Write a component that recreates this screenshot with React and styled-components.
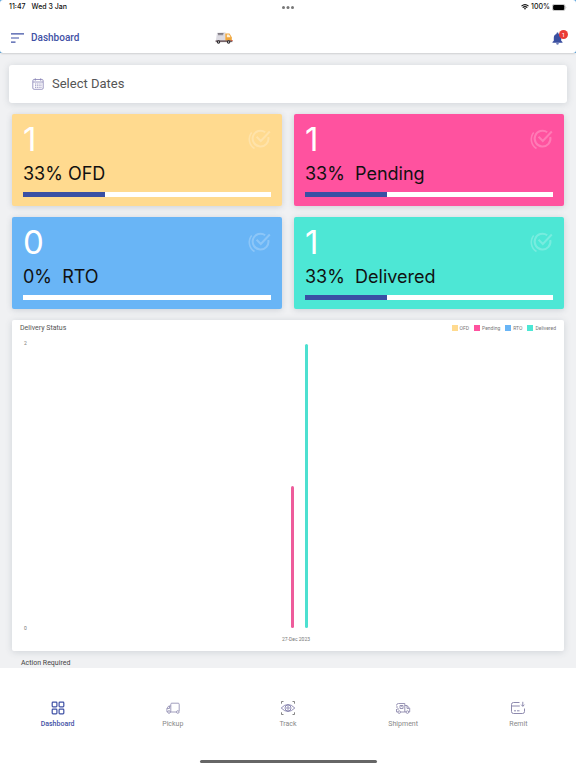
import React from 'react';
import styled, { createGlobalStyle } from "styled-components";

const GlobalStyle = createGlobalStyle`
  * {
    box-sizing: border-box;
  }
  body {
    margin: 0;
    background: #f0f1f3;
    font-family: Roboto, "Liberation Sans", sans-serif;
  }
  button {
    border: 0;
    padding: 0;
    background: transparent;
    font-family: inherit;
    cursor: pointer;
  }
  svg {
    display: block;
    flex: none;
  }
`;

const Screen = styled.div`
  height: 100vh;
  display: flex;
  flex-direction: column;
  overflow: hidden;
`;

const Top = styled.header`
  flex: none;
  background: #fff;
  border-radius: 3px;
  box-shadow: 0 1px 2px rgba(0, 0, 0, 0.14);
`;

const TopEdge = styled.div`
  background: #5ba7e0;
  position: relative;
  z-index: 1;
`;

const StatusBar = styled.div`
  height: 14px;
  padding: 0 9px;
  display: grid;
  grid-template-columns: 1fr auto 1fr;
  align-items: center;
  font-family: Inter, sans-serif;
  font-size: 7px;
  font-weight: 500;
  line-height: 14px;
  color: #111;
`;

const StatusGroup = styled.div`
  display: flex;
  align-items: center;
  justify-content: ${({ $end }) => ($end ? "flex-end" : "flex-start")};
  gap: ${({ $end }) => ($end ? "2px" : "6px")};
`;

const AppBar = styled.div`
  height: 39px;
  padding: 8px 8px 0 11px;
  display: grid;
  grid-template-columns: 204px 1fr auto;
  align-items: center;
`;

const MenuGroup = styled.div`
  display: flex;
  align-items: center;
  gap: 7px;
`;

const PageTitle = styled.h1`
  margin: 0;
  font-size: 10px;
  font-weight: 500;
  line-height: 14px;
  color: #3f51a5;
`;

const BellButton = styled.button`
  position: relative;
  width: 16px;
  height: 16px;
`;

const Badge = styled.span`
  position: absolute;
  top: 0;
  right: 0;
  width: 9px;
  height: 9px;
  border-radius: 50%;
  background: #ea3b35;
  color: #fff;
  font-size: 6px;
  line-height: 9px;
  text-align: center;
`;

const Main = styled.main`
  flex: 1;
  min-height: 0;
  overflow: hidden;
  padding: 12px 12px 0;
  display: flex;
  flex-direction: column;
  gap: 11px;
  background: #f0f1f3;
`;

const DateButton = styled.button`
  flex: none;
  height: 38px;
  margin: 0 -3px;
  padding: 0 23px 2px;
  display: flex;
  align-items: center;
  gap: 8px;
  border-radius: 3px;
  background: #fff;
  box-shadow: 0 1px 7px rgba(60, 75, 95, 0.18);
  font-size: 13px;
  color: #555;
`;

const Cards = styled.section`
  display: grid;
  grid-template-columns: 1fr 1fr;
  gap: 11px 12px;
`;

const Card = styled.article`
  height: 92px;
  padding: 5px 11px 0;
  border-radius: 2px;
  background: ${({ $color }) => $color};
  box-shadow: 0 1px 6px rgba(60, 75, 95, 0.2);
  font-family: Inter, sans-serif;
`;

const CardHead = styled.div`
  height: 40px;
  display: flex;
  align-items: center;
  justify-content: space-between;
`;

const Count = styled.div`
  font-size: 33px;
  font-weight: 400;
  line-height: 40px;
  color: #fff;
`;

const CardLabel = styled.div`
  height: 33px;
  font-size: 18px;
  line-height: 30px;
  white-space: pre;
  color: #111;
`;

const Track = styled.div`
  height: 5px;
  background: #fff;
`;

const Fill = styled.div`
  height: 100%;
  background: #3a50a4;
`;

const ChartCard = styled.section`
  flex: none;
  height: 331px;
  padding: 3px 8px 8px;
  display: flex;
  flex-direction: column;
  border-radius: 2px;
  background: #fff;
  box-shadow: 0 1px 7px rgba(60, 75, 95, 0.18);
`;

const ChartHead = styled.div`
  display: flex;
  justify-content: space-between;
  align-items: center;
  height: 10px;
`;

const ChartTitle = styled.h2`
  margin: 0;
  font-size: 7px;
  font-weight: 400;
  line-height: 10px;
  color: #555;
`;

const Legend = styled.ul`
  display: flex;
  gap: 5px;
  margin: 0;
  padding: 0;
  list-style: none;
  font-size: 5px;
  line-height: 10px;
  color: #777;
`;

const LegendItem = styled.li`
  display: flex;
  align-items: center;
  gap: 2px;
  &::before {
    content: "";
    width: 6px;
    height: 6px;
    background: ${({ $color }) => $color};
  }
`;

const Plot = styled.div`
  height: 284px;
  margin-top: 11px;
  display: grid;
  grid-template-columns: 22px 1fr;
`;

const Axis = styled.div`
  display: flex;
  flex-direction: column;
  justify-content: space-between;
  margin: -5px 0 -4px;
  padding-left: 4px;
  font-size: 5px;
  line-height: 8px;
  color: #777;
`;

const Bars = styled.div`
  display: flex;
  justify-content: center;
  align-items: flex-end;
  gap: 11px;
`;

const Bar = styled.div`
  width: 3px;
  border-radius: 2px;
  background: ${({ $color }) => $color};
`;

const AxisDate = styled.div`
  margin-top: 7px;
  padding-left: 16px;
  font-size: 5px;
  line-height: 8px;
  text-align: center;
  color: #777;
`;

const SectionTitle = styled.h2`
  margin: -4px 0 0 9px;
  font-size: 7px;
  font-weight: 400;
  line-height: 10px;
  color: #444;
`;

const BottomNav = styled.nav`
  flex: none;
  height: 100px;
  background: #fff;
  display: flex;
  flex-direction: column;
  justify-content: space-between;
  align-items: center;
`;

const Tabs = styled.div`
  width: 100%;
  padding-top: 32px;
  display: grid;
  grid-template-columns: repeat(5, 1fr);
`;

const Tab = styled.button`
  display: flex;
  flex-direction: column;
  align-items: center;
  gap: 3px;
  font-size: 7px;
  font-weight: ${({ $active }) => ($active ? 500 : 400)};
  line-height: 10px;
  color: ${({ $active }) => ($active ? "#3f51a5" : "#888")};
`;

const HomeBar = styled.div`
  width: 177px;
  height: 3px;
  margin-bottom: 5px;
  border-radius: 2px;
  background: #666;
`;

const stats = [
  { name: "OFD", count: 1, percent: 33, label: "33% OFD", color: "#ffda8f" },
  { name: "Pending", count: 1, percent: 33, label: "33%  Pending", color: "#ff529f" },
  { name: "RTO", count: 0, percent: 0, label: "0%  RTO", color: "#69b5f6" },
  { name: "Delivered", count: 1, percent: 33, label: "33%  Delivered", color: "#4de7d5" },
];

const MenuIcon = () => (
  <svg width="13" height="10" viewBox="0 0 13 10" stroke="#3f51a5" strokeWidth="1.2">
    <path d="M0 .8h13M0 5h8M0 9.2h4.500" />
  </svg>
);

const TruckLogo = () => (
  <svg width="18" height="12" viewBox="0 0 18 12">
    <path d="M2 .8 10.500 .3V9H.8Z" fill="#dddbe2" />
    <path d="M2.800 1.500h5.700M3 2.700h5.200" stroke="#68636c" strokeWidth=".8" />
    <path d="M10.300 1.500h4.200l2.300 3.700V9h-6.500Z" fill="#f0a63c" />
    <path d="M11.800 2.500h2.300l1.500 2.800h-3.800Z" fill="#fff2da" />
    <path d="M.6 8.300h16.800v1.800H.6Z" fill="#77656a" />
    <circle cx="3.500" cy="10" r="1.700" fill="#272529" />
    <circle cx="13.600" cy="10" r="1.700" fill="#272529" />
    <circle cx="3.500" cy="10" r=".7" fill="#ddd" />
    <circle cx="13.600" cy="10" r=".7" fill="#ddd" />
    <path d="M16.300 8h1.200v1h-1.200Z" fill="#e45431" />
  </svg>
);

const WifiIcon = () => (
  <svg width="8" height="6" viewBox="0 0 8 6" fill="none" stroke="#111" strokeWidth="1.100">
    <path d="M.5 2.200Q4-1 7.500 2.200M1.700 3.600Q4 1.500 6.300 3.600" />
    <path d="M2.900 4.400Q4 3.500 5.100 4.400L4 5.800Z" fill="#111" stroke="none" />
  </svg>
);

const BatteryIcon = () => (
  <svg width="15" height="7" viewBox="0 0 15 7">
    <rect x=".4" y=".4" width="12.600" height="6.200" rx="1.800" fill="none" stroke="#999" strokeWidth=".6" />
    <rect x="1.100" y="1.100" width="11.200" height="4.800" rx="1.200" fill="#000" />
    <path d="M13.800 2.400q1 1.100 0 2.200Z" fill="#999" />
  </svg>
);

const BellIcon = () => (
  <svg width="11" height="15" viewBox="0 -2 11 15" fill="#3a4fa0">
    <path d="M5.500 .6c.6 0 1 .4 1 1v.3c1.700.4 2.700 1.900 2.700 3.800v3l1.300 1.300v.7H.5V10l1.300-1.300v-3c0-1.900 1-3.400 2.700-3.800v-.3c0-.6.4-1 1-1ZM4.200 11.300h2.600c0 .8-.5 1.300-1.300 1.300s-1.300-.5-1.300-1.300Z" />
  </svg>
);

const CalendarIcon = () => (
  <svg width="12" height="14" viewBox="0 -2 12 14" fill="none" stroke="#8580b4" strokeWidth=".8">
    <rect x=".8" y="1.500" width="10.400" height="9.800" rx="1.300" />
    <path d="M1 4h10M3.300 .3v2.400M8.700 .3v2.400" />
    <path d="M3 6h6.500M3 7.700h6.500M3 9.400h6.500" strokeDasharray="1.100 .7" />
  </svg>
);

const CheckIcon = () => (
  <svg width="24" height="22" viewBox="0 0 24 22" fill="none" stroke="#fff" strokeOpacity=".24">
    <path d="M21.300 9A7.900 7.900 0 1 1 18.200 4.200" strokeWidth="2" />
    <path d="m9.600 8.800 4.200 4.200 9-9.500" strokeWidth="2" />
    <path d="M4.700 4.500A10.800 10.800 0 0 0 7.500 20.500" strokeWidth="1.600" />
  </svg>
);

const DashboardIcon = () => (
  <svg width="16" height="16" viewBox="0 0 16 16" fill="none" stroke="#3f51a5" strokeWidth="1.200">
    <rect x="2.200" y="2.200" width="4.700" height="4.700" rx=".8" />
    <rect x="9.100" y="2.200" width="4.700" height="4.700" rx=".8" />
    <rect x="2.200" y="9.100" width="4.700" height="4.700" rx=".8" />
    <rect x="9.100" y="9.100" width="4.700" height="4.700" rx=".8" />
  </svg>
);

const PickupIcon = () => (
  <svg width="16" height="16" viewBox="0 0 16 16" fill="none" stroke="#9693b5" strokeWidth=".9">
    <path d="M5.800 11.800V4.200q0-1 1-1h6.400q1 0 1 1v6.900M5.800 6H3.700L1.900 8.500v3.300h1M5 12h6.500" />
    <path d="M4.500 6v2.500H2" />
    <circle cx="4" cy="12" r="1.300" />
    <circle cx="12.800" cy="12" r="1.300" />
  </svg>
);

const TrackIcon = () => (
  <svg width="16" height="16" viewBox="0 0 16 16" fill="none" stroke="#8581ad" strokeWidth=".9">
    <path d="M1.500 3.700V1.500h2M12.500 1.500h2v2.200M14.500 12.300v2.200h-2M3.500 14.500h-2v-2.200" stroke="#777" />
    <path d="M1.200 8q6.800-7 13.600 0-6.800 7-13.600 0Z" />
    <circle cx="8" cy="8" r="3" />
    <circle cx="8" cy="8" r="1.200" />
  </svg>
);

const ShipmentIcon = () => (
  <svg width="16" height="16" viewBox="0 0 16 16" fill="none" stroke="#8e8aae" strokeWidth=".9">
    <path d="M2.800 11.900H1.500V9M1.500 5.500q0-2 2-2h6.300V12H5.500M9.800 5.500h2.300l2.600 3v3.400h-1M9.800 11.900h1.300M12 5.700v2.700h2.500" />
    <path d="M1 7h2M2 9h2M5 5.500h3v3H5ZM6.500 5.500v1.200" />
    <circle cx="4.200" cy="12.100" r="1.300" />
    <circle cx="12.400" cy="12.100" r="1.300" />
  </svg>
);

const RemitIcon = () => (
  <svg width="16" height="16" viewBox="0 0 16 16" fill="none" stroke="#8e8aae" strokeWidth="1">
    <path d="M9.500 2.500H3.500q-2 0-2 2v7q0 2 2 2h9q2 0 2-2V8.500M1.500 6h8.300" />
    <path d="M4 10.800h2M7 10.800h2.500" />
    <path d="M12.800 1.800v4.500M11.200 4.700l1.600 1.600 1.600-1.600" />
  </svg>
);

const tabs = [
  { name: "Dashboard", Icon: DashboardIcon, active: true },
  { name: "Pickup", Icon: PickupIcon },
  { name: "Track", Icon: TrackIcon },
  { name: "Shipment", Icon: ShipmentIcon },
  { name: "Remit", Icon: RemitIcon },
];

function App() {
  return (
    <Screen>
      <GlobalStyle />
      <TopEdge>
        <Top>
          <StatusBar>
            <StatusGroup>
              <span>11:47</span>
              <span>Wed 3 Jan</span>
            </StatusGroup>
            <svg width="12" height="3" viewBox="0 0 12 3" fill="#777">
              <circle cx="1.500" cy="1.500" r="1.500" />
              <circle cx="6" cy="1.500" r="1.500" />
              <circle cx="10.500" cy="1.500" r="1.500" />
            </svg>
            <StatusGroup $end>
              <WifiIcon />
              <span>100%</span>
              <BatteryIcon />
            </StatusGroup>
          </StatusBar>
          <AppBar>
            <MenuGroup>
              <button aria-label="Menu"><MenuIcon /></button>
              <PageTitle>Dashboard</PageTitle>
            </MenuGroup>
            <TruckLogo />
            <BellButton aria-label="Notifications">
              <BellIcon />
              <Badge>1</Badge>
            </BellButton>
          </AppBar>
        </Top>
      </TopEdge>

      <Main>
        <DateButton>
          <CalendarIcon />
          <span>Select Dates</span>
        </DateButton>

        <Cards>
          {stats.map((stat) => (
            <Card key={stat.name} $color={stat.color}>
              <CardHead>
                <Count>{stat.count}</Count>
                <CheckIcon />
              </CardHead>
              <CardLabel>{stat.label}</CardLabel>
              <Track>
                <Fill style={{ width: `${stat.percent}%` }} />
              </Track>
            </Card>
          ))}
        </Cards>

        <ChartCard>
          <ChartHead>
            <ChartTitle>Delivery Status</ChartTitle>
            <Legend>
              {stats.map((stat) => (
                <LegendItem key={stat.name} $color={stat.color}>{stat.name}</LegendItem>
              ))}
            </Legend>
          </ChartHead>
          <Plot>
            <Axis>
              <span>2</span>
              <span>0</span>
            </Axis>
            <Bars>
              <Bar $color="#ee5c9b" style={{ height: "50%" }} />
              <Bar $color="#4de0d0" style={{ height: "100%" }} />
            </Bars>
          </Plot>
          <AxisDate>27-Dec 2023</AxisDate>
        </ChartCard>

        <SectionTitle>Action Required</SectionTitle>
      </Main>

      <BottomNav>
        <Tabs>
          {tabs.map(({ name, Icon, active }) => (
            <Tab key={name} $active={active}>
              <Icon />
              <span>{name}</span>
            </Tab>
          ))}
        </Tabs>
        <HomeBar />
      </BottomNav>
    </Screen>
  );
}

export default App;
